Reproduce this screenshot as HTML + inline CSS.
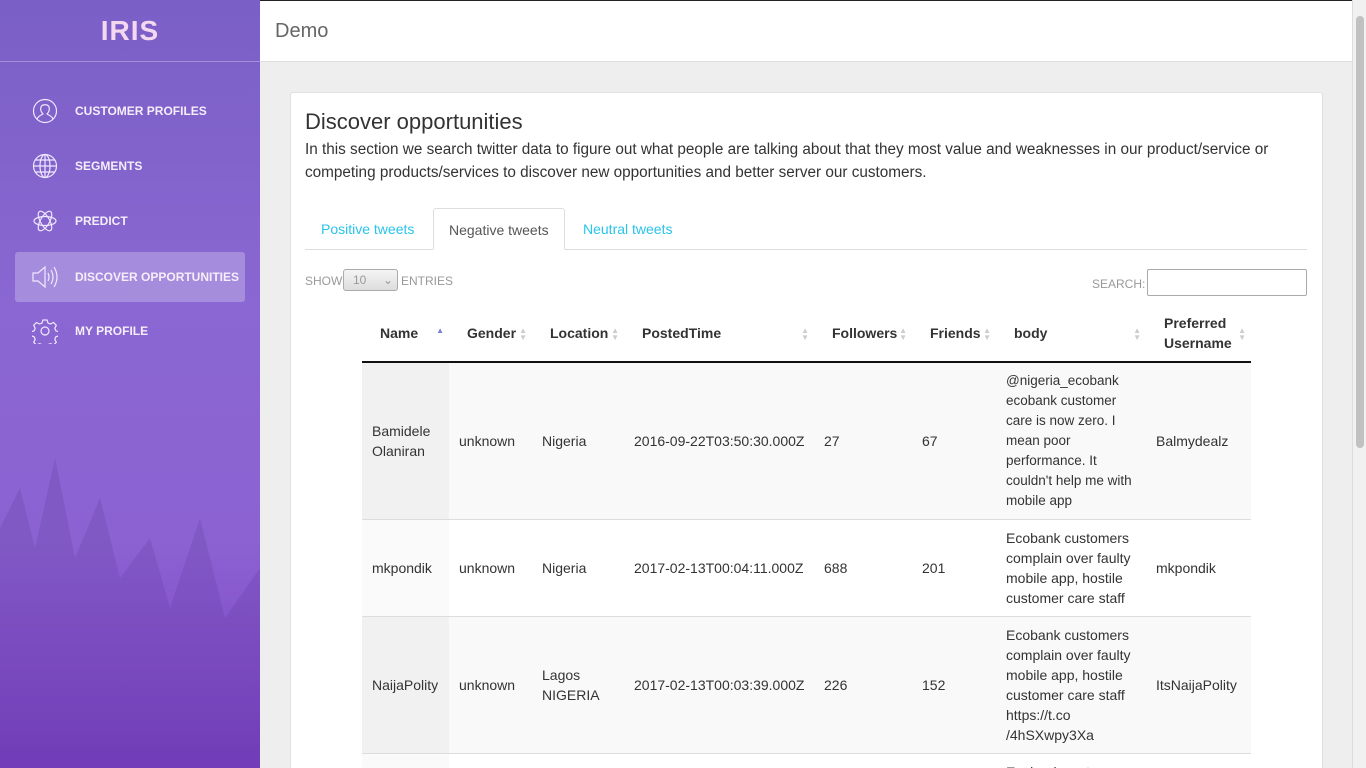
<!DOCTYPE html>
<html><head><meta charset="utf-8"><style>
*{box-sizing:border-box;margin:0;padding:0}
html,body{width:1366px;height:768px;overflow:hidden}
body{font-family:"Liberation Sans",Roboto,sans-serif;background:#eee;position:relative}
.side{position:absolute;left:0;top:0;width:260px;height:768px;background:linear-gradient(180deg,#7a5fc6 0%,#8a67d2 40%,#8c62d2 70%,#7a42c2 100%);overflow:hidden}
.side .logo{height:62px;border-bottom:1px solid rgba(255,255,255,.3);text-align:center;font:bold 28px "Liberation Sans",sans-serif;color:#f4d8f0;letter-spacing:1px;line-height:62px}
.nav{position:absolute;left:15px;width:230px;height:50px;display:flex;align-items:center;color:#f4eefb;font-size:12px;font-weight:bold;border-radius:3px}
.nav svg{position:absolute;left:17px}
.nav span{position:absolute;left:60px}
.nav.act{background:rgba(255,255,255,.25)}
.trees{position:absolute;left:0;bottom:0;width:260px;height:360px;opacity:.12}
.top{position:absolute;left:260px;top:0;width:1092px;height:62px;background:#fff;border-bottom:1px solid #ddd;border-top:1px solid #222}
.top div{position:absolute;left:15px;top:19px;font-size:20px;color:#666}
.scroll{position:absolute;right:0;top:0;width:14px;height:768px;background:#f1f1f1;border-left:1px solid #ddd}
.scroll div{position:absolute;left:3px;top:16px;width:8px;height:432px;background:#c1c1c1;border-radius:4px}
.card{position:absolute;left:290px;top:92px;width:1033px;height:676px;background:#fff;border:1px solid #e0e0e0;border-bottom:none;border-radius:3px 3px 0 0;overflow:hidden}
h2{position:absolute;left:14px;top:16px;font-weight:normal;font-size:22px;color:#333}
.desc{position:absolute;left:14px;top:45px;width:1005px;font-size:15.3px;line-height:23px;color:#333}
.tabs{position:absolute;left:14px;top:115px;width:1002px;height:42px;border-bottom:1px solid #ddd}
.tab{position:absolute;top:0;height:42px;line-height:42px;font-size:14px;color:#29c4ea}
.tab.a{border:1px solid #ddd;border-bottom:1px solid #fff;background:#fff;color:#555;border-radius:3px 3px 0 0;padding:0 15px;height:42px}
.small{position:absolute;font-size:12px;color:#999}
.sel{position:absolute;left:52px;top:176px;width:55px;height:22px;border:1px solid #aaa;border-radius:3px;background:linear-gradient(#f5f5f5,#ddd);font-size:12px;color:#999;padding:3px 9px;white-space:nowrap}
.srch{position:absolute;left:856px;top:176px;width:160px;height:27px;border:1px solid #aaa;border-radius:2px;background:#fff}
table{position:absolute;left:71px;top:212px;width:889px;border-collapse:collapse;font-size:14px;color:#333;table-layout:fixed}
th{text-align:left;font-weight:bold;height:57px;border-bottom:2px solid #111;padding:0 10px 0 18px;position:relative;line-height:20px}
th i{position:absolute;right:5px;top:22px;font-style:normal;font-size:8px;color:#ccc;line-height:7px}
td{padding:0 10px;line-height:20px;border-bottom:1px solid #ddd}
td.n{white-space:nowrap}
tr.o td{background:#f9f9f9}
tr.o td.s{background:#f1f1f1}
tr.e td.s{background:#fafafa}
</style></head><body>
<div class="side">
<div class="logo">IRIS</div>
<svg class="trees" viewBox="0 0 260 360"><path d="M0 360V120l20 -40 15 60 20-90 20 100 25-60 20 80 30-40 20 70 30-90 25 100 35-50V360z" fill="#3a1a70"/></svg>
<div class="nav" style="top:86px"><svg width="26" height="26" viewBox="0 0 26 26" fill="none" stroke="#f0e8ff" stroke-width="1.2"><circle cx="13" cy="13" r="11.5"/><path d="M5 21c2-4 5-4 6-5-2-2-3-4-2-7 1-3 7-3 8 0 1 3 0 5-2 7 1 1 4 1 6 5"/></svg><span>CUSTOMER PROFILES</span></div>
<div class="nav" style="top:141px"><svg width="26" height="26" viewBox="0 0 26 26" fill="none" stroke="#f0e8ff" stroke-width="1.2"><circle cx="13" cy="13" r="11.5"/><ellipse cx="13" cy="13" rx="5" ry="11.5"/><path d="M13 1.5v23M1.5 13h23M3 7h20M3 19h20"/></svg><span>SEGMENTS</span></div>
<div class="nav" style="top:196px"><svg width="26" height="26" viewBox="0 0 26 26" fill="none" stroke="#f0e8ff" stroke-width="1.2"><ellipse cx="13" cy="13" rx="11" ry="4.5"/><ellipse cx="13" cy="13" rx="11" ry="4.5" transform="rotate(60 13 13)"/><ellipse cx="13" cy="13" rx="11" ry="4.5" transform="rotate(-60 13 13)"/></svg><span>PREDICT</span></div>
<div class="nav act" style="top:252px"><svg width="26" height="26" viewBox="0 0 26 26" fill="none" stroke="#f0e8ff" stroke-width="1.2"><path d="M1 9h5l7-6v20l-7-6H1z"/><path d="M16 9q2 4 0 8M19 6q4 7 0 14M22 3q6 10 0 20"/></svg><span>DISCOVER OPPORTUNITIES</span></div>
<div class="nav" style="top:306px"><svg width="26" height="26" viewBox="0 0 26 26" fill="none" stroke="#f0e8ff" stroke-width="1.2"><circle cx="13" cy="13" r="4"/><path d="M11 2h4l1 3 2.5 1 3-1.5 2.8 2.8-1.5 3 1 2.5 3 1v4l-3 1-1 2.5 1.5 3-2.8 2.8-3-1.5-2.5 1-1 3h-4l-1-3-2.5-1-3 1.5-2.8-2.8 1.5-3-1-2.5-3-1v-4l3-1 1-2.5-1.5-3 2.8-2.8 3 1.5 2.5-1z"/></svg><span>MY PROFILE</span></div>
</div>
<div class="top"><div>Demo</div></div>
<div class="scroll"><div></div></div>
<div class="card">
<h2>Discover opportunities</h2>
<div class="desc">In this section we search twitter data to figure out what people are talking about that they most value and weaknesses in our product/service or competing products/services to discover new opportunities and better server our customers.</div>
<div class="tabs">
<div class="tab" style="left:16px">Positive tweets</div>
<div class="tab a" style="left:128px;width:132px">Negative tweets</div>
<div class="tab" style="left:278px">Neutral tweets</div>
</div>
<div class="small" style="left:14px;top:181px">SHOW</div>
<div class="sel">10 &nbsp;&nbsp;&nbsp;&nbsp;⌄</div>
<div class="small" style="left:110px;top:181px">ENTRIES</div>
<div class="small" style="left:801px;top:184px">SEARCH:</div>
<div class="srch"></div>
<table>
<colgroup><col style="width:87px"><col style="width:83px"><col style="width:92px"><col style="width:190px"><col style="width:98px"><col style="width:84px"><col style="width:150px"><col style="width:105px"></colgroup>
<tr><th>Name<i style="color:#7b7bd8">▲</i></th><th>Gender<i>▲<br>▼</i></th><th>Location<i>▲<br>▼</i></th><th>PostedTime<i>▲<br>▼</i></th><th>Followers<i>▲<br>▼</i></th><th>Friends<i>▲<br>▼</i></th><th>body<i>▲<br>▼</i></th><th>Preferred Username<i>▲<br>▼</i></th></tr>
<tr class="o" style="height:157px"><td class="s">Bamidele Olaniran</td><td>unknown</td><td>Nigeria</td><td class="n">2016-09-22T03:50:30.000Z</td><td>27</td><td>67</td><td style="font-size:13.5px">@nigeria_ecobank ecobank customer care is now zero. I mean poor performance. It couldn't help me with mobile app</td><td>Balmydealz</td></tr>
<tr class="e" style="height:97px"><td class="s">mkpondik</td><td>unknown</td><td>Nigeria</td><td class="n">2017-02-13T00:04:11.000Z</td><td>688</td><td>201</td><td>Ecobank customers complain over faulty mobile app, hostile customer care staff</td><td>mkpondik</td></tr>
<tr class="o" style="height:137px"><td class="s">NaijaPolity</td><td>unknown</td><td>Lagos NIGERIA</td><td class="n">2017-02-13T00:03:39.000Z</td><td>226</td><td>152</td><td>Ecobank customers complain over faulty mobile app, hostile customer care staff https://t.co /4hSXwpy3Xa</td><td>ItsNaijaPolity</td></tr>
<tr class="e" style="height:60px"><td class="s"></td><td></td><td></td><td></td><td></td><td></td><td style="vertical-align:top;padding-top:8px">Ecobank customers</td><td></td></tr>
</table>
</div>
</body></html>
